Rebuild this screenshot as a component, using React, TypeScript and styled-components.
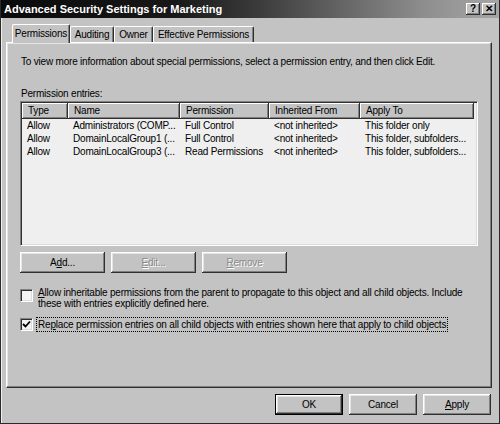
import styled, { createGlobalStyle } from "styled-components";

const font = `"Liberation Sans", Arial, sans-serif`;

const GlobalStyle = createGlobalStyle`
    body {
        margin: 0;
        background: #c3c3c3;
        font-family: ${font};
    }
`;

const Window = styled.div`
    width: 500px;
    height: 424px;
    box-sizing: border-box;
    background: #c3c3c3;
    border: 1px solid #2a2a2a;
    border-top: none;
    box-shadow: inset 1px 0 #f0f0f0;
    display: flex;
    flex-direction: column;
    font-family: ${font};
    font-size: 10px;
    letter-spacing: -0.2px;
    color: #000;
`;

const TitleBar = styled.div`
    height: 18px;
    display: flex;
    align-items: center;
    padding: 0 3px 0 3px;
    background: linear-gradient(to right, #0a0a0a 0%, #181818 35%, #3c3c3c 52%, #8e8e8e 85%, #a6a6a6 100%);
`;

const TitleText = styled.div`
    flex: 1;
    color: #fff;
    font-weight: bold;
    font-size: 11px;
    letter-spacing: 0;
`;

const CaptionButton = styled.div`
    width: 14px;
    height: 12px;
    margin-left: 2px;
    box-sizing: border-box;
    background: #c3c3c3;
    box-shadow: inset -1px -1px #303030, inset 1px 1px #fff, inset -2px -2px #808080;
    display: flex;
    align-items: center;
    justify-content: center;
    font-weight: bold;
    font-size: 10px;
    line-height: 1;
`;

const Content = styled.div`
    display: flex;
    flex-direction: column;
    padding: 6px 7px 0 5px;
`;

const TabRow = styled.div`
    display: flex;
    align-items: flex-end;
    height: 18px;
    padding-left: 6px;
`;

const Tab = styled.div<{ $active?: boolean; $w: number }>`
    position: relative;
    z-index: ${(p) => (p.$active ? 1 : 0)};
    width: ${(p) => p.$w}px;
    height: ${(p) => (p.$active ? 19 : 16)}px;
    margin-bottom: ${(p) => (p.$active ? -1 : 0)}px;
    box-sizing: border-box;
    background: #c3c3c3;
    border-top: 1px solid #fff;
    border-left: 1px solid #fff;
    border-right: 1px solid #303030;
    border-radius: 2px 2px 0 0;
    box-shadow: inset -1px 0 #808080;
    display: flex;
    align-items: center;
    justify-content: center;
    white-space: nowrap;
    padding-bottom: ${(p) => (p.$active ? 2 : 0)}px;
`;

const Panel = styled.div`
    height: 346px;
    box-sizing: border-box;
    border-top: 1px solid #fff;
    border-left: 1px solid #fff;
    border-right: 1px solid #303030;
    border-bottom: 1px solid #303030;
    box-shadow: inset -1px -1px #808080, inset 1px 1px #e4e4e4;
    padding: 12px 13px 0 14px;
    display: flex;
    flex-direction: column;
`;

const Text = styled.div`
    line-height: 13px;
    white-space: nowrap;
`;

const Label = styled(Text)`
    margin-top: 19px;
`;

const ListView = styled.div`
    margin: 1px 0 0 -1px;
    width: 458px;
    height: 145px;
    box-sizing: border-box;
    background: #efefef;
    border-top: 1px solid #808080;
    border-left: 1px solid #808080;
    border-right: 1px solid #fff;
    border-bottom: 1px solid #fff;
    box-shadow: inset 1px 1px #303030, inset -1px -1px #dcdcdc;
    padding: 1px;
`;

const Grid = styled.div`
    display: grid;
    grid-template-columns: 46px 112px 89px 91px 114px;
`;

const HeaderCell = styled.div`
    height: 16px;
    line-height: 15px;
    box-sizing: border-box;
    padding-left: 6px;
    background: #c3c3c3;
    box-shadow: inset -1px -1px #303030, inset 1px 1px #fff, inset -2px -2px #808080;
    white-space: nowrap;
    overflow: hidden;
`;

const Cell = styled.div`
    height: 13px;
    line-height: 13px;
    padding-left: 5px;
    white-space: nowrap;
    overflow: hidden;
`;

const ButtonRow = styled.div`
    display: flex;
    gap: 6px;
    margin: 6px 0 0 -1px;
`;

const Button = styled.div<{ $w: number; $disabled?: boolean; $default?: boolean }>`
    width: ${(p) => p.$w}px;
    height: 21px;
    box-sizing: border-box;
    background: #c3c3c3;
    border: ${(p) => (p.$default ? "1px solid #000" : "none")};
    box-shadow: inset -1px -1px #303030, inset 1px 1px #fff, inset -2px -2px #808080, inset 2px 2px #e4e4e4;
    display: flex;
    align-items: center;
    justify-content: center;
    color: ${(p) => (p.$disabled ? "#8a8a8a" : "#000")};
    text-shadow: ${(p) => (p.$disabled ? "1px 1px #fff" : "none")};
`;

const CheckRow = styled.div<{ $top: number }>`
    display: flex;
    align-items: flex-start;
    gap: 4px;
    margin: ${(p) => p.$top}px 0 0 -1px;
`;

const CheckBox = styled.div<{ $offset: number }>`
    width: 13px;
    height: 13px;
    flex: none;
    margin-top: ${(p) => p.$offset}px;
    box-sizing: border-box;
    background: #f4f4f4;
    border-top: 1px solid #808080;
    border-left: 1px solid #808080;
    border-right: 1px solid #fff;
    border-bottom: 1px solid #fff;
    box-shadow: inset 1px 1px #303030, inset -1px -1px #dcdcdc;
    display: flex;
    align-items: center;
    justify-content: center;
`;

const CheckLabel = styled.div<{ $focus?: boolean }>`
    line-height: ${(p) => (p.$focus ? 13 : 11)}px;
    padding: 0 1px;
    outline: ${(p) => (p.$focus ? "1px dotted #000" : "none")};
    white-space: nowrap;
`;

const Footer = styled.div`
    display: flex;
    justify-content: flex-end;
    gap: 6px;
    margin: 6px 1px 0 0;
`;

const U = styled.span`
    text-decoration: underline;
`;

const rows = [
    ["Allow", "Administrators (COMP...", "Full Control", "<not inherited>", "This folder only"],
    ["Allow", "DomainLocalGroup1 (...", "Full Control", "<not inherited>", "This folder, subfolders..."],
    ["Allow", "DomainLocalGroup3 (...", "Read Permissions", "<not inherited>", "This folder, subfolders..."],
];

const columns = ["Type", "Name", "Permission", "Inherited From", "Apply To"];

const App = (): JSX.Element => {
    return (
        <>
            <GlobalStyle />
            <Window>
                <TitleBar>
                    <TitleText>Advanced Security Settings for Marketing</TitleText>
                    <CaptionButton>?</CaptionButton>
                    <CaptionButton>✕</CaptionButton>
                </TitleBar>
                <Content>
                    <TabRow>
                        <Tab $active $w={58}>Permissions</Tab>
                        <Tab $w={44}>Auditing</Tab>
                        <Tab $w={39}>Owner</Tab>
                        <Tab $w={101}>Effective Permissions</Tab>
                    </TabRow>
                    <Panel>
                        <Text>
                            To view more information about special permissions, select a permission entry, and then click Edit.
                        </Text>
                        <Label>Permission entries:</Label>
                        <ListView>
                            <Grid>
                                {columns.map((c) => (
                                    <HeaderCell key={c}>{c}</HeaderCell>
                                ))}
                            </Grid>
                            {rows.map((r, i) => (
                                <Grid key={i}>
                                    {r.map((c, j) => (
                                        <Cell key={j}>{c}</Cell>
                                    ))}
                                </Grid>
                            ))}
                        </ListView>
                        <ButtonRow>
                            <Button $w={85}>
                                A<U>d</U>d...
                            </Button>
                            <Button $w={85} $disabled>
                                <U>E</U>dit...
                            </Button>
                            <Button $w={85} $disabled>
                                <U>R</U>emove
                            </Button>
                        </ButtonRow>
                        <CheckRow $top={14}>
                            <CheckBox $offset={2} />
                            <CheckLabel>
                                <U>A</U>llow inheritable permissions from the parent to propagate to this object and all child objects. Include
                                <br />
                                these with entries explicitly defined here.
                            </CheckLabel>
                        </CheckRow>
                        <CheckRow $top={9}>
                            <CheckBox $offset={0}>
                                <svg width="9" height="9" viewBox="0 0 9 9">
                                    <polyline points="1,4 3.5,6.5 8,1.5" fill="none" stroke="#000" strokeWidth="1.8" />
                                </svg>
                            </CheckBox>
                            <CheckLabel $focus>
                                Re<U>p</U>lace permission entries on all child objects with entries shown here that apply to child objects
                            </CheckLabel>
                        </CheckRow>
                    </Panel>
                    <Footer>
                        <Button $w={68} $default>
                            OK
                        </Button>
                        <Button $w={68}>Cancel</Button>
                        <Button $w={68}>
                            <U>A</U>pply
                        </Button>
                    </Footer>
                </Content>
            </Window>
        </>
    );
};

export default App;
